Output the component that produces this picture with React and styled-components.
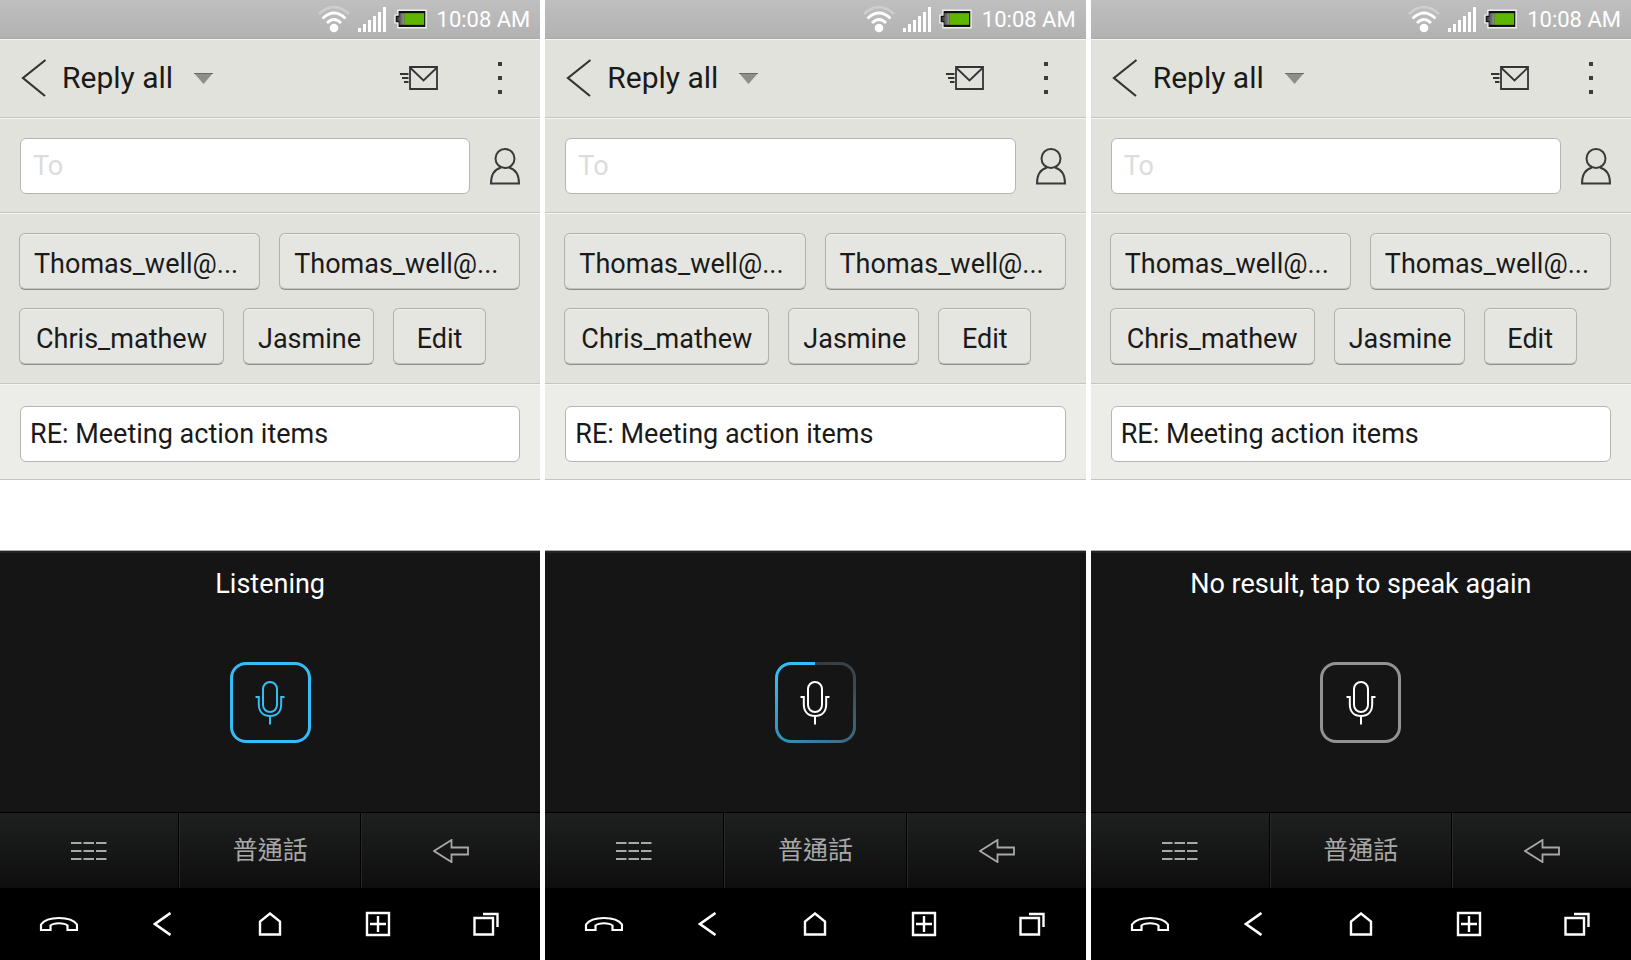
import styled, { createGlobalStyle } from "styled-components";

const GlobalStyle = createGlobalStyle`
  * {
    box-sizing: border-box;
  }

  body {
    margin: 0;
    background: #ffffff;
    font-family: Roboto, "Noto Sans CJK TC", sans-serif;
  }

  button,
  input,
  select {
    font: inherit;
    color: inherit;
    margin: 0;
    padding: 0;
  }

  svg {
    display: block;
    flex: none;
  }
`;

// Layout
const Board = styled.main`
  display: grid;
  grid-template-columns: repeat(3, minmax(0, 1fr));
  gap: 5px;
  min-height: 100vh;
`;

const Phone = styled.section`
  display: flex;
  flex-direction: column;
  color: #1a1a1a;
`;

const StatusBar = styled.div`
  display: flex;
  justify-content: flex-end;
  align-items: center;
  gap: 8px;
  height: 39px;
  padding: 0 10px;
  background: linear-gradient(#bfbfbf, #b2b2b2);
  border-bottom: 1px solid #a9a9a8;
  color: #ffffff;
`;

const Clock = styled.time`
  padding-top: 2px;
  margin-left: 2px;
  font-size: 22px;
  font-weight: 400;
  line-height: 24px;
  white-space: nowrap;
`;

const Band = styled.div`
  background: ${(props) => (props.$light ? "#ecede8" : "#e1e2dc")};
  border-bottom: 1px solid #c8c4bf;
  box-shadow: inset 0 1px 0 #f6f6f3;
`;

const Header = styled(Band)`
  display: flex;
  align-items: center;
  height: 79px;
  padding: 0 20px;
`;

const ToRow = styled(Band)`
  display: flex;
  align-items: center;
  gap: 20px;
  padding: 20px 20px 18px;
`;

const ChipArea = styled(Band)`
  display: flex;
  flex-direction: column;
  gap: 18px;
  padding: 20px 20px 18px 19px;
`;

const SubjectRow = styled(Band)`
  padding: 22px 20px 17px;
`;

const ChipRow = styled.div`
  display: flex;
  gap: 19px;
`;

// Controls
const IconButton = styled.button`
  display: flex;
  align-items: center;
  justify-content: center;
  background: none;
  border: none;
  cursor: pointer;
`;

const ModePicker = styled.label`
  display: flex;
  align-items: center;
  gap: 20px;
  margin-left: 14px;
  margin-right: auto;
`;

const ModeSelect = styled.select`
  appearance: none;
  background: none;
  border: none;
  font-size: 30px;
  line-height: 36px;
`;

const HeaderActions = styled.div`
  display: flex;
  align-items: center;
  gap: 60px;
  padding-right: 18px;
`;

const TextBox = styled.input`
  display: block;
  width: 100%;
  min-width: 0;
  height: 56px;
  padding: 0 ${(props) => (props.$roomy ? "12px" : "9px")};
  background: #ffffff;
  border: 1px solid #b5b5b2;
  border-radius: 6px;
  font-size: 27px;

  &::placeholder {
    color: #dcdcdc;
    opacity: 1;
  }
`;

const Chip = styled.button`
  flex: ${(props) => (props.$width ? `0 1 ${props.$width}` : "1 1 0")};
  min-width: 0;
  height: 57px;
  padding: 4px 14px 0;
  background: #e5e6e1;
  border: 1px solid #b0b0ad;
  border-bottom-color: #8f8f8c;
  border-radius: 6px;
  box-shadow: inset 0 1px 0 #f1f1ee, inset 0 -1px 0 #c2c2be;
  font-size: 27px;
  text-align: ${(props) => (props.$width ? "center" : "left")};
  white-space: nowrap;
`;

const MessageBody = styled.div`
  flex: 1;
  min-height: 70px;
  background: #ffffff;
`;

// Voice input
const VoicePanel = styled.div`
  display: flex;
  flex-direction: column;
  align-items: center;
  gap: 62px;
  height: 262px;
  padding-top: 17px;
  background: #151515;
  border-top: 1px solid #a9adab;
  box-shadow: inset 0 2px 0 #222424;
`;

const VoiceMessage = styled.p`
  height: 32px;
  margin: 0;
  color: #ffffff;
  font-size: 27px;
  line-height: 32px;
`;

const frames = {
  listening: "linear-gradient(#35bdf5, #35bdf5)",
  processing:
    "conic-gradient(#35393b, #3b4c54 20%, #3c7189 42%, #3290b8 62%, #35bdf5 85%, #35bdf5)",
  idle: "linear-gradient(#929292, #929292)",
};

const MicButton = styled(IconButton)`
  width: 81px;
  height: 81px;
  border: 3px solid transparent;
  border-radius: 16px;
  background:
    linear-gradient(#151515, #151515) padding-box,
    ${(props) => frames[props.$state]} border-box;
  color: ${(props) => (props.$state === "listening" ? "#35bdf5" : "#ffffff")};
`;

const KeyRow = styled.div`
  display: grid;
  grid-template-columns: 179fr 182fr 179fr;
  height: 76px;
  border-top: 1px solid #000000;
`;

const Key = styled(IconButton)`
  background: linear-gradient(#1e1f1f, #0e0e0e);
  border-left: 1px solid #292929;
  border-right: 1px solid #000000;
  color: #a8a8a8;
  font-size: 25px;
  line-height: 32px;

  &:first-child {
    border-left: none;
  }

  &:last-child {
    border-right: none;
  }
`;

const NavBar = styled.nav`
  display: grid;
  grid-template-columns: repeat(5, 1fr);
  height: 72px;
  background: #000000;
  color: #ffffff;
`;

// Icons
const WifiIcon = () => (
  <svg width="32" height="28" viewBox="0 0 32 28" fill="none" stroke="#fff" strokeWidth="2.8">
    <path d="M1 9Q16 -5 31 9" stroke="#cfcfcf" strokeWidth="2.4" />
    <path d="M4.500 13.500Q16 2.500 27.500 13.500" />
    <path d="M9 18Q16 11 23 18" />
    <circle cx="16" cy="23" r="4.300" fill="#fff" stroke="none" />
  </svg>
);

const SignalIcon = () => (
  <svg width="28" height="25" viewBox="0 0 28 25" fill="#fff">
    <path d="M0 21h3v4h-3zM5 17h3v8h-3zM10 13h3v12h-3zM15 9h3v16h-3zM20 5h3v20h-3zM25 0h3v25h-3z" />
  </svg>
);

const BatteryIcon = () => (
  <svg width="33" height="20" viewBox="0 0 34 20">
    <defs>
      <linearGradient id="battery-empty">
        <stop offset="0" stopColor="#333" />
        <stop offset="1" stopColor="#999" />
      </linearGradient>
    </defs>
    <path d="M4 1H33V19H4V14H1V6H4Z" fill="#111" stroke="#eee" strokeWidth="1.5" />
    <path d="M5.500 4H11V16H5.500V12H3V8H5.500Z" fill="url(#battery-empty)" />
    <path d="M11 4H31V16H11Z" fill="#5eb600" />
  </svg>
);

const BackIcon = () => (
  <svg width="28" height="40" viewBox="0 0 28 40" fill="none" stroke="#343434" strokeWidth="2.200">
    <path d="M25.500 2L3 20L25 38" />
  </svg>
);

const CaretIcon = () => (
  <svg width="19" height="11" viewBox="0 0 19 11">
    <path d="M0 0H19L9.500 11Z" fill="#8d8d8a" />
    <path d="M0 .5H19" stroke="#696967" />
  </svg>
);

const SendIcon = () => (
  <svg width="38" height="24" viewBox="0 0 38 24" fill="none" stroke="#343434" strokeWidth="1.800">
    <path d="M10 1H37V23H10Z" />
    <path d="M10.500 2L23.500 14.500L36.500 2M0 8H8.500M2 12H8.500M4 16H8.500" />
  </svg>
);

const MoreIcon = () => (
  <svg width="4" height="32" viewBox="0 0 4 32" fill="#3c3c3c">
    <path d="M0 0h4v4h-4zM0 14h4v4h-4zM0 28h4v4h-4z" />
  </svg>
);

const PersonIcon = () => (
  <svg width="30" height="37" viewBox="0 0 30 37" fill="none" stroke="#3a3a3a" strokeWidth="2">
    <circle cx="15" cy="10.500" r="9.500" />
    <path d="M11 19.500C4 21.500 1 27 1 35.500H29C29 27 26 21.500 19 19.500" />
  </svg>
);

const MicIcon = () => (
  <svg width="30" height="44" viewBox="0 0 30 44" fill="none" stroke="currentColor" strokeWidth="2">
    <rect x="8" y="1" width="14" height="30" rx="7" />
    <path d="M0.500 16H3.800V23C3.800 31 8.500 35 15 35S26.200 31 26.200 23V16H29.500M15 35V43.500" />
  </svg>
);

const KeypadIcon = () => (
  <svg width="36" height="20" viewBox="0 0 36 20" stroke="currentColor" strokeWidth="2">
    <path d="M0 2H10.500M12.500 2H23M25 2H35.500M0 10H10.500M12.500 10H23M25 10H35.500M0 18H10.500M12.500 18H23M25 18H35.500" />
  </svg>
);

const DeleteIcon = () => (
  <svg width="36" height="24" viewBox="0 0 36 24" fill="none" stroke="currentColor" strokeWidth="1.800">
    <path d="M1 12L18.500 1V8.500H35V15.500H18.500V23Z" />
  </svg>
);

const CallIcon = () => (
  <svg width="48" height="24" viewBox="0 0 48 24" fill="none" stroke="currentColor" strokeWidth="2.200">
    <path d="M11 18V12.500C17 3.800 41 3.800 47 12.500V18H37.500V13.500C34 10.500 24 10.500 20.500 13.500V18Z" />
  </svg>
);

const NavBackIcon = () => (
  <svg width="18" height="24" viewBox="0 0 18 24" fill="none" stroke="currentColor" strokeWidth="2.600">
    <path d="M17.500 1L2 12L17.500 23" />
  </svg>
);

const HomeIcon = () => (
  <svg width="24" height="24" viewBox="0 0 24 24" fill="none" stroke="currentColor" strokeWidth="2.400">
    <path d="M2 22.500V9.500L12 1.500L22 9.500V22.500Z" />
  </svg>
);

const AddIcon = () => (
  <svg width="26" height="26" viewBox="0 0 26 26" fill="none" stroke="currentColor" strokeWidth="2.400">
    <path d="M2 2H24V24H2ZM5 13H21M13 5V21" />
  </svg>
);

const RecentIcon = () => (
  <svg width="26" height="24" viewBox="0 0 26 24" fill="none" stroke="currentColor" strokeWidth="2.400">
    <path d="M1.500 6H20V22.500H1.500ZM10 2H24.500V15" />
  </svg>
);

const recipientRows = [
  [{ name: "Thomas_well@..." }, { name: "Thomas_well@..." }],
  [
    { name: "Chris_mathew", width: "205px" },
    { name: "Jasmine", width: "131px" },
    { name: "Edit", width: "93px" },
  ],
];

const navItems = [
  { label: "Call", icon: <CallIcon /> },
  { label: "Back", icon: <NavBackIcon /> },
  { label: "Home", icon: <HomeIcon /> },
  { label: "Add", icon: <AddIcon /> },
  { label: "Recent apps", icon: <RecentIcon /> },
];

const screens = [
  { state: "listening", message: "Listening" },
  { state: "processing", message: "" },
  { state: "idle", message: "No result, tap to speak again" },
];

const PhoneScreen = ({ state, message }) => (
  <Phone>
    <StatusBar>
      <WifiIcon />
      <SignalIcon />
      <BatteryIcon />
      <Clock>10:08 AM</Clock>
    </StatusBar>

    <Header>
      <IconButton type="button" aria-label="Back">
        <BackIcon />
      </IconButton>
      <ModePicker>
        <ModeSelect aria-label="Reply mode" defaultValue="all">
          <option value="all">Reply all</option>
          <option value="one">Reply</option>
        </ModeSelect>
        <CaretIcon />
      </ModePicker>
      <HeaderActions>
        <IconButton type="button" aria-label="Send">
          <SendIcon />
        </IconButton>
        <IconButton type="button" aria-label="More options">
          <MoreIcon />
        </IconButton>
      </HeaderActions>
    </Header>

    <ToRow>
      <TextBox $roomy type="text" aria-label="To" placeholder="To" />
      <IconButton type="button" aria-label="Choose contact">
        <PersonIcon />
      </IconButton>
    </ToRow>

    <ChipArea>
      {recipientRows.map((row, i) => (
        <ChipRow key={i}>
          {row.map((chip, j) => (
            <Chip key={j} type="button" $width={chip.width}>
              {chip.name}
            </Chip>
          ))}
        </ChipRow>
      ))}
    </ChipArea>

    <SubjectRow $light>
      <TextBox type="text" aria-label="Subject" defaultValue="RE: Meeting action items" />
    </SubjectRow>

    <MessageBody />

    <VoicePanel>
      <VoiceMessage>{message}</VoiceMessage>
      <MicButton type="button" aria-label="Speak" $state={state}>
        <MicIcon />
      </MicButton>
    </VoicePanel>

    <KeyRow>
      <Key type="button" aria-label="Keyboard">
        <KeypadIcon />
      </Key>
      <Key type="button">普通話</Key>
      <Key type="button" aria-label="Delete">
        <DeleteIcon />
      </Key>
    </KeyRow>

    <NavBar>
      {navItems.map((item) => (
        <IconButton key={item.label} type="button" aria-label={item.label}>
          {item.icon}
        </IconButton>
      ))}
    </NavBar>
  </Phone>
);

const App = () => (
  <>
    <GlobalStyle />
    <Board>
      {screens.map((screen) => (
        <PhoneScreen key={screen.state} {...screen} />
      ))}
    </Board>
  </>
);

export default App;
